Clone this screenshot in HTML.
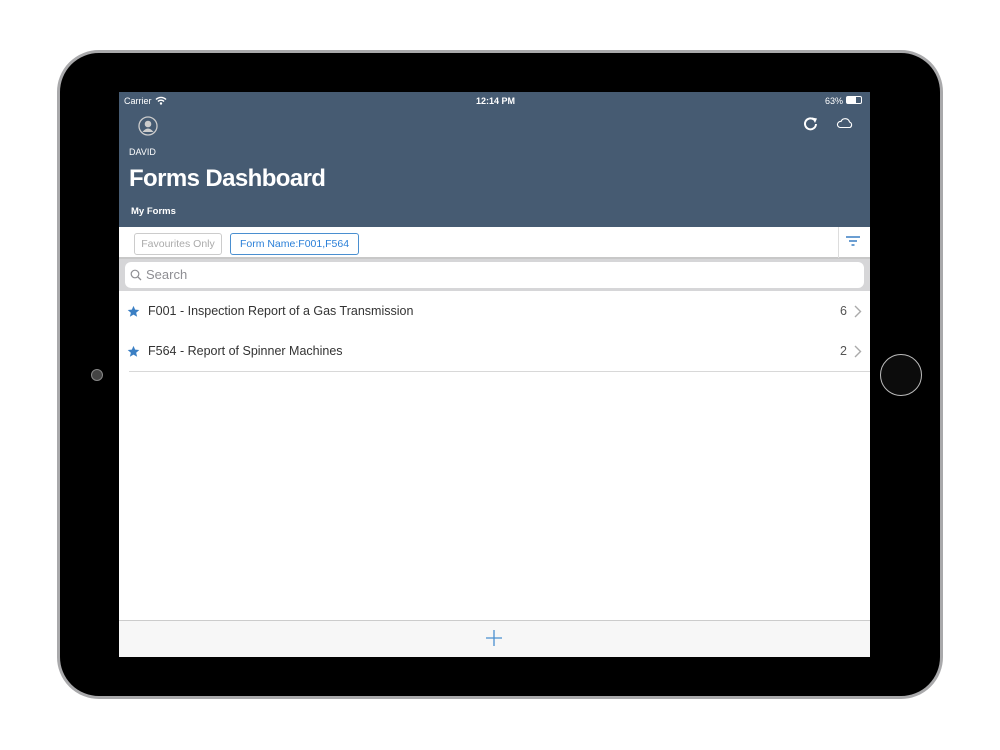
<!DOCTYPE html>
<html><head><meta charset="utf-8"><style>
*{margin:0;padding:0;box-sizing:border-box}
body{width:1000px;height:750px;background:#fff;position:relative;overflow:hidden;font-family:"Liberation Sans",sans-serif}
.frame{position:absolute;left:57px;top:50px;width:886px;height:649px;border-radius:42px;background:#000;border:3px solid #a9a9ab}
.screen{position:absolute;left:119px;top:92px;width:751px;height:565px;background:#fff;overflow:hidden}
.hdr{position:absolute;left:0;top:0;width:751px;height:135px;background:#465b72;color:#fff}
.abs{position:absolute}
</style></head><body>
<div class="frame"></div>
<div class="abs" style="left:91px;top:369px;width:12px;height:12px;border-radius:50%;background:#444;border:1px solid #888"></div>
<div class="abs" style="left:880px;top:354px;width:42px;height:42px;border-radius:50%;background:#0c0c0c;border:1.5px solid #bbb"></div>
<div class="screen">
 <div class="hdr">
  <div class="abs" style="left:5px;top:4px;font-size:9px">Carrier</div>
  <svg class="abs" style="left:36px;top:4px" width="12" height="9" viewBox="0 0 12 9"><path d="M1 3.5A7 7 0 0 1 11 3.5M3 5.5A4 4 0 0 1 9 5.5" stroke="#fff" stroke-width="1.4" fill="none"/><circle cx="6" cy="7.5" r="1.2" fill="#fff"/></svg>
  <div class="abs" style="left:357px;top:4px;font-size:9px;font-weight:bold">12:14 PM</div>
  <div class="abs" style="left:706px;top:4px;font-size:9px">63%</div>
  <div class="abs" style="left:727px;top:4px;width:16px;height:8px;border:1px solid #fff;border-radius:2px"><div style="width:9px;height:6px;background:#fff"></div></div>
  <svg class="abs" style="left:19px;top:24px" width="20" height="20" viewBox="0 0 20 20"><circle cx="10" cy="10" r="9" stroke="#ccc" stroke-width="1.3" fill="none"/><circle cx="10" cy="8" r="3.3" fill="#ccc"/><path d="M4.5 16Q10 9 15.5 16" fill="#ccc"/></svg>
  <svg class="abs" style="left:683px;top:23px" width="18" height="18" viewBox="0 0 18 18"><path d="M14 9A5.5 5.5 0 1 1 12 4.6" stroke="#fff" stroke-width="2" fill="none"/><path d="M10 2.5L15 3.5L13 8Z" fill="#fff"/></svg>
  <svg class="abs" style="left:717px;top:25px" width="18" height="12" viewBox="0 0 18 12"><path d="M4 10.5H14A3 3 0 0 0 13.5 5A4.5 4.5 0 0 0 5 4.5A3 3 0 0 0 4 10.5Z" stroke="#fff" stroke-width="1.1" fill="none"/></svg>
  <div class="abs" style="left:10px;top:55px;font-size:9px">DAVID</div>
  <div class="abs" style="left:10px;top:73px;font-size:24px;font-weight:bold;letter-spacing:-0.6px">Forms Dashboard</div>
  <div class="abs" style="left:12px;top:114px;font-size:9.5px;font-weight:bold">My Forms</div>
 </div>
 <div class="abs" style="left:0;top:135px;width:751px;height:32px;background:#fff;border-bottom:2px solid #c8c8c8"></div>
 <div class="abs" style="left:15px;top:141px;width:88px;height:22px;border:1px solid #ccc;border-radius:3px;color:#aaa;font-size:10.5px;text-align:center;line-height:21px">Favourites Only</div>
 <div class="abs" style="left:111px;top:141px;width:129px;height:22px;border:1px solid #4a8fd0;border-radius:3px;color:#2a7fd8;font-size:10.5px;text-align:center;line-height:21px">Form Name:F001,F564</div>
 <div class="abs" style="left:719px;top:135px;width:1px;height:31px;background:#ddd"></div>
 <svg class="abs" style="left:727px;top:144px" width="14" height="11" viewBox="0 0 14 11"><path d="M0 1H14M3 5H11M5.5 9H8.5" stroke="#3a7fc4" stroke-width="1.5"/></svg>
 <div class="abs" style="left:0;top:167px;width:751px;height:32px;background:#d6d6d8"></div>
 <div class="abs" style="left:6px;top:170px;width:739px;height:26px;background:#fff;border-radius:6px"></div>
 <svg class="abs" style="left:11px;top:177px" width="12" height="12" viewBox="0 0 12 12"><circle cx="5" cy="5" r="3.8" stroke="#8e8e93" stroke-width="1.2" fill="none"/><path d="M7.8 7.8L11 11" stroke="#8e8e93" stroke-width="1.3"/></svg>
 <div class="abs" style="left:27px;top:175px;font-size:13px;color:#8e8e93">Search</div>
 <svg class="abs" style="left:8px;top:213px" width="13" height="13" viewBox="0 0 24 24"><path d="M12 1.5l3.1 7 7.6.7-5.8 5 1.8 7.5L12 17.8 5.3 21.7l1.8-7.5-5.8-5 7.6-.7z" fill="#3a7fc4"/></svg>
 <div class="abs" style="left:29px;top:212px;font-size:12.5px;color:#333">F001 - Inspection Report of a Gas Transmission</div>
 <div class="abs" style="left:721px;top:212px;font-size:12.5px;color:#555">6</div>
 <svg class="abs" style="left:735px;top:213px" width="8" height="13" viewBox="0 0 8 13"><path d="M1 1L6.5 6.5L1 12" stroke="#aaa" stroke-width="1.4" fill="none"/></svg>
 <svg class="abs" style="left:8px;top:253px" width="13" height="13" viewBox="0 0 24 24"><path d="M12 1.5l3.1 7 7.6.7-5.8 5 1.8 7.5L12 17.8 5.3 21.7l1.8-7.5-5.8-5 7.6-.7z" fill="#3a7fc4"/></svg>
 <div class="abs" style="left:29px;top:252px;font-size:12.5px;color:#333">F564 - Report of Spinner Machines</div>
 <div class="abs" style="left:721px;top:252px;font-size:12.5px;color:#555">2</div>
 <svg class="abs" style="left:735px;top:253px" width="8" height="13" viewBox="0 0 8 13"><path d="M1 1L6.5 6.5L1 12" stroke="#aaa" stroke-width="1.4" fill="none"/></svg>
 <div class="abs" style="left:10px;top:279px;width:741px;height:1px;background:#d8d8d8"></div>
 <div class="abs" style="left:0;top:528px;width:751px;height:37px;background:#f7f7f7;border-top:1px solid #ccc"></div>
 <svg class="abs" style="left:367px;top:538px" width="16" height="16" viewBox="0 0 16 16"><path d="M8 0V16M0 8H16" stroke="#4a8fd0" stroke-width="1.3"/></svg>
</div>
</body></html>
